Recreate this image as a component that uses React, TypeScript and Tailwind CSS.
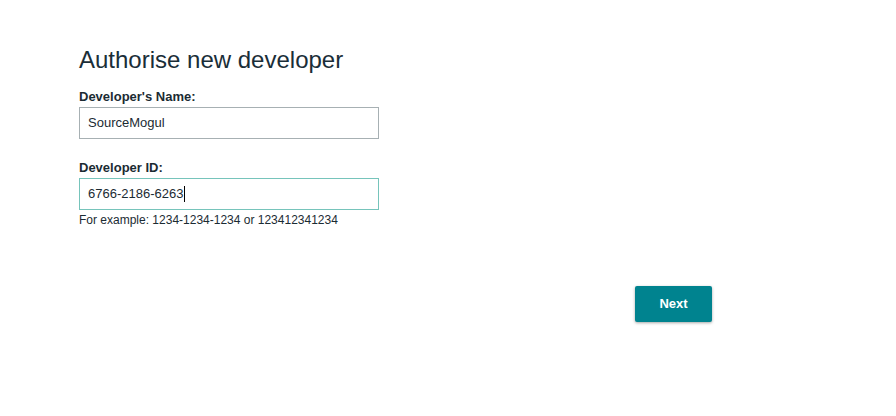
import React from "react";

export default function App() {
  return (
    <div
      className="w-[896px] h-[416px] bg-white text-[#1b2b33]"
      style={{ fontFamily: '"Liberation Sans", Arial, sans-serif' }}
    >
      <div className="pl-[79px] pt-[46px] w-[712px] flex flex-col">
        <h1 className="text-[24px] leading-[28px] font-normal text-[#1a2e38]">
          Authorise new developer
        </h1>
        <label className="mt-[15px] mb-[2px] text-[13px] leading-[16px] font-bold">
          Developer's Name:
        </label>
        <div className="w-[300px] h-[32px] border border-[#a7b0b3] flex items-center px-[8px] text-[13px]">
          SourceMogul
        </div>
        <label className="mt-[21px] mb-[2px] text-[13px] leading-[16px] font-bold">
          Developer ID:
        </label>
        <div className="w-[300px] h-[32px] border border-[#76c4bb] flex items-center px-[8px] text-[13px]">
          <span>6766-2186-6263</span>
          <span className="inline-block w-[1px] h-[16px] bg-black ml-[1px]" />
        </div>
        <p className="mt-[3px] text-[12px] leading-[14px]">
          For example: 1234-1234-1234 or 123412341234
        </p>
        <div className="flex justify-end mt-[59px]">
          <button className="w-[77px] h-[36px] bg-[#00838f] text-white text-[13px] font-bold rounded-[2px] shadow-[0_1px_3px_rgba(0,0,0,0.35)]">
            Next
          </button>
        </div>
      </div>
    </div>
  );
}
